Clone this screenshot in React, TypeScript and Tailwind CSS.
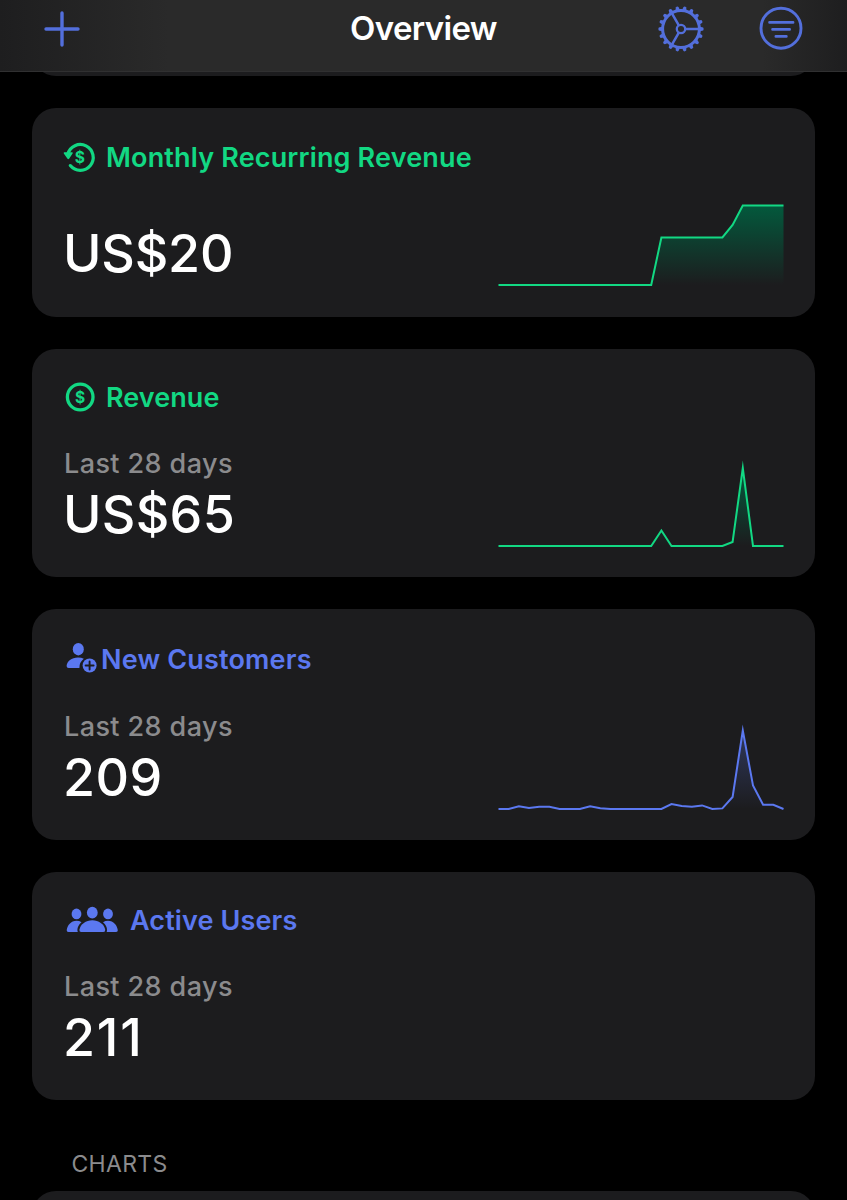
import type { ReactNode } from 'react';

const GREEN = '#12d883';
const BLUE = '#5b78f0';

function PlusIcon() {
  return (
    <svg width="36" height="36" viewBox="0 0 36 36" fill="none" stroke="#536fdc" strokeWidth="3.4" strokeLinecap="round">
      <path d="M18 2v32M2 18h32" />
    </svg>
  );
}

function GearIcon() {
  const teeth = Array.from({ length: 18 }, (_, i) => i * 20);
  return (
    <svg width="48" height="48" viewBox="-24 -24 48 48" fill="none" stroke="#536fdc">
      <circle r="18.4" strokeWidth="3" />
      {teeth.map((a) => (
        <path key={a} d="M19 -2.2L22.2 -1.4Q23.2 0 22.2 1.4L19 2.2Z" fill="#536fdc" stroke="none" transform={`rotate(${a})`} />
      ))}
      <circle r="4.2" strokeWidth="2.3" />
      <path d="M4.5 0H19M-2.3 -3.9L-9.5 -16.4M-2.3 3.9L-9.5 16.4" strokeWidth="2.5" />
    </svg>
  );
}

function FilterIcon() {
  return (
    <svg width="44" height="44" viewBox="0 0 44 44" fill="none" stroke="#536fdc" strokeWidth="2.9" strokeLinecap="round" className="overflow-visible">
      <circle cx="22" cy="21.2" r="20" />
      <path d="M10.5 15.4h23.6M13.5 22.4h17.2M16.8 29.4h10.6" strokeWidth="2.6" />
    </svg>
  );
}

function DollarGlyph() {
  return (
    <text x="16" y="21.6" textAnchor="middle" fontSize="15.5" fontWeight="700" fill={GREEN} className="font-['Inter',sans-serif]">
      $
    </text>
  );
}

function RecurringIcon() {
  return (
    <svg width="32" height="32" viewBox="0 0 32 32" className="overflow-visible">
      <path d="M3.8 13.2A12.9 12.9 0 1 1 6.3 24.6" fill="none" stroke={GREEN} strokeWidth="3.2" strokeLinecap="round" />
      <path d="M0.2 11.2H8.2Q9.2 11.5 8.6 12.4L5.1 17.8Q4.3 18.6 3.5 17.8L-0.2 12.4Q-0.6 11.5 0.2 11.2Z" fill={GREEN} />
      <DollarGlyph />
    </svg>
  );
}

function DollarIcon() {
  return (
    <svg width="32" height="32" viewBox="0 0 32 32">
      <circle cx="16.2" cy="16" r="12.8" fill="none" stroke={GREEN} strokeWidth="3.3" />
      <DollarGlyph />
    </svg>
  );
}

function AddPersonIcon() {
  return (
    <svg width="34" height="34" viewBox="0 0 34 34" fill={BLUE}>
      <ellipse cx="14.3" cy="7.2" rx="5.5" ry="6.2" />
      <path d="M15.4 26H4.6Q2.6 26 2.6 24C2.8 19.3 7.6 15.4 14 15.4Q17.4 15.4 19.8 16.7Q15.2 20.2 15.4 26Z" />
      <circle cx="25.6" cy="23.5" r="7" />
      <path d="M25.6 19.5v8M21.6 23.5h8" stroke="#1c1c1e" strokeWidth="1.9" strokeLinecap="round" />
    </svg>
  );
}

function GroupIcon() {
  return (
    <svg width="54" height="32" viewBox="0 -1 54 32" fill={BLUE}>
      <ellipse cx="12.5" cy="8.9" rx="4.9" ry="5.3" />
      <ellipse cx="44" cy="8.9" rx="4.9" ry="5.3" />
      <path d="M13.8 27H4.4Q2.6 27 2.7 25.2C3.2 20.5 7 15.8 12.5 15.8Q15.3 15.8 17.5 17.2C14.6 19.7 12.6 23.5 13.8 27Z" />
      <path d="M42.7 27H52.1Q53.9 27 53.8 25.2C53.3 20.5 49.5 15.8 44 15.8Q41.2 15.8 39 17.2C41.9 19.7 43.9 23.5 42.7 27Z" />
      <ellipse cx="28.3" cy="7.7" rx="5.4" ry="5.9" />
      <path d="M17.2 27Q15.1 27 15.4 24.7C16.4 19.2 22 15.3 28.3 15.3S40.2 19.2 41.2 24.7Q41.5 27 39.4 27Z" />
    </svg>
  );
}

type ChartProps = { id: string; color: string; fill: string; points: number[]; opacity: number };

const STEP = 285 / 28;

function Sparkline({ id, color, fill, points, opacity }: ChartProps) {
  const coords = points.map((v, i) => `${(0.5 + i * STEP).toFixed(1)} ${88 - v}`);
  const line = `M${coords.join('L')}`;
  const top = 88 - Math.max(...points);
  return (
    <svg width="286" height="90" viewBox="0 0 286 90" className="shrink-0">
      <defs>
        <linearGradient id={id} gradientUnits="userSpaceOnUse" x1="0" y1={top} x2="0" y2="88">
          <stop offset="0" stopColor={fill} stopOpacity={opacity} />
          <stop offset="1" stopColor={fill} stopOpacity="0" />
        </linearGradient>
      </defs>
      <path d={`${line}L285.5 88L0.5 88Z`} fill={`url(#${id})`} />
      <path d={line} fill="none" stroke={color} strokeWidth="2" strokeLinejoin="miter" strokeMiterlimit="20" />
    </svg>
  );
}

const flat = (n: number) => Array<number>(n).fill(0);
const MRR = [...flat(16), ...Array<number>(7).fill(47.5), 60, ...Array<number>(5).fill(79.5)];
const REVENUE = [...flat(16), 15.5, ...flat(6), 4, 78, ...flat(4)];
const CUSTOMERS = [0, 0, 2.8, 1, 2.2, 2.2, 0, 0, 0, 2.8, 0.8, 0, 0, 0, 0, 0, 0, 5, 3, 2.2, 3.6, 0, 0.6, 12, 78.5, 23.5, 4.2, 4.2, 0];

type CardProps = {
  size: string;
  icon: ReactNode;
  title: string;
  titleClass: string;
  period?: string;
  value: string;
  valueClass: string;
  chart?: ReactNode;
};

function MetricCard({ size, icon, title, titleClass, period, value, valueClass, chart }: CardProps) {
  return (
    <section className={`flex flex-col justify-between rounded-[24px] bg-[#1c1c1e] pl-8 pr-[31px] ${size}`}>
      <h2 className={`flex h-8 items-center whitespace-nowrap text-[27px] font-semibold ${titleClass}`}>
        {icon}
        <span className="pt-0.5">{title}</span>
      </h2>
      <div className="flex items-end justify-between">
        <div>
          {period && <p className="h-8 text-[27px] font-medium leading-8 tracking-[0.4px] text-[#8b8b8d]">{period}</p>}
          <p className={`-ml-px mt-[9px] h-[52px] text-[52px] font-medium leading-[52px] text-white ${valueClass}`}>{value}</p>
        </div>
        {chart}
      </div>
    </section>
  );
}

export default function App() {
  return (
    <div className="flex h-[1200px] w-[847px] flex-col overflow-hidden bg-black font-['Inter',sans-serif] antialiased">
      <header className="relative z-10 h-[72px] shrink-0 border-b border-[#303031] bg-[#2a2a2a]">
        <div className="grid h-full grid-cols-3 bg-linear-to-r from-[#1e1e1f] via-transparent via-20% to-transparent pb-[13px]">
          <div className="flex items-center pl-11">
            <button aria-label="Add"><PlusIcon /></button>
          </div>
          <h1 className="flex items-center justify-center text-[33px] font-semibold tracking-[-0.65px] text-white">Overview</h1>
          <div className="-mb-[13px] flex items-center justify-end gap-[54px] bg-linear-to-r from-transparent from-70% to-[#1e1e1f] pb-[13px] pr-11">
            <button aria-label="Settings"><GearIcon /></button>
            <button aria-label="Filter"><FilterIcon /></button>
          </div>
        </div>
      </header>
      <main className="flex flex-col px-8">
        <div className="-mt-8 h-9 shrink-0 rounded-b-[24px] bg-[#1c1c1e]" />
        <MetricCard
          size="mt-8 h-[209px] pt-[33px] pb-[30px]"
          icon={<RecurringIcon />}
          title="Monthly Recurring Revenue"
          titleClass="gap-[10px] tracking-[0.16px] text-[#12d883]"
          value="US$20"
          valueClass="mb-[7px] tracking-[-0.2px]"
          chart={<Sparkline id="mrr" color={GREEN} fill="#006040" points={MRR} opacity={0.9} />}
        />
        <MetricCard
          size="mt-8 h-[228px] pt-8 pb-[29px]"
          icon={<DollarIcon />}
          title="Revenue"
          titleClass="gap-[10px] tracking-[0.05px] text-[#12d883]"
          period="Last 28 days"
          value="US$65"
          valueClass="mb-[7px] tracking-[0.3px]"
          chart={<Sparkline id="revenue" color={GREEN} fill="#006040" points={REVENUE} opacity={0.9} />}
        />
        <MetricCard
          size="mt-8 h-[231px] pt-[34px] pb-[29px]"
          icon={<AddPersonIcon />}
          title="New Customers"
          titleClass="gap-[3px] tracking-[0.18px] text-[#5b78f0]"
          period="Last 28 days"
          value="209"
          valueClass="mb-[7px] tracking-[0.4px]"
          chart={<Sparkline id="customers" color={BLUE} fill={BLUE} points={CUSTOMERS} opacity={0.3} />}
        />
        <MetricCard
          size="mt-8 h-[228px] pt-8 pb-[29px]"
          icon={<GroupIcon />}
          title="Active Users"
          titleClass="gap-3 tracking-[0.12px] text-[#5b78f0]"
          period="Last 28 days"
          value="211"
          valueClass="mb-[7px] tracking-[1.8px]"
        />
        <h2 className="mt-12 h-8 pl-[39.5px] text-[23px] leading-8 tracking-[0.3px] text-[#8b8b8d]">CHARTS</h2>
        <div className="mt-[11px] h-10 shrink-0 rounded-t-[24px] bg-[#1c1c1e]" />
      </main>
    </div>
  );
}
